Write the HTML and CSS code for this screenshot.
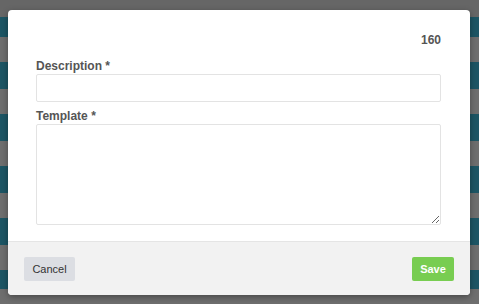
FILE: index.html
```html
<!DOCTYPE html>
<html>
<head>
<meta charset="utf-8">
<link rel="stylesheet" href="styles.css">
</head>
<body>
<div class="modal">
  <div class="modal-body">
    <div class="counter">160</div>
    <label class="label">Description *</label>
    <input class="input" type="text">
    <label class="label label-template">Template *</label>
    <textarea class="textarea"></textarea>
  </div>
  <div class="modal-footer">
    <button class="btn btn-cancel">Cancel</button>
    <button class="btn btn-save">Save</button>
  </div>
</div>
</body>
</html>
```
FILE: styles.css
```css
html, body {
  margin: 0;
  height: 100%;
}
body {
  font-family: "Liberation Sans", Arial, sans-serif;
  font-size: 12px;
  color: #555;
  background-color: #6e6e6e;
  background-image:
    linear-gradient(to bottom, #666 0px, #666 17px, transparent 17px),
    repeating-linear-gradient(to bottom, #6e6e6e 0px, #6e6e6e 25px, #1d5564 25px, #1d5564 52px);
  background-repeat: no-repeat, repeat;
  background-position: 0 0, 0 -15px;
  padding: 10px 9px 9px 8px;
  box-sizing: border-box;
}
.modal {
  width: 462px;
  height: 285px;
  background: #fff;
  border-radius: 4px;
  box-shadow: 0 2px 6px rgba(0,0,0,0.35);
  display: flex;
  flex-direction: column;
  overflow: hidden;
}
.modal-body {
  padding: 22px 29px 16px 28px;
  display: flex;
  flex-direction: column;
  flex: 1;
}
.counter {
  text-align: right;
  font-weight: bold;
  line-height: 16px;
  margin-bottom: 10px;
}
.label {
  font-weight: bold;
  line-height: 16px;
  display: block;
}
.label-template {
  margin-top: 6px;
}
.input {
  margin: 0;
  height: 28px;
  box-sizing: border-box;
  border: 1px solid #e3e3e3;
  border-radius: 2px;
  padding: 4px 8px;
  font: inherit;
}
.textarea {
  margin: 0;
  height: 101px;
  box-sizing: border-box;
  border: 1px solid #e3e3e3;
  border-radius: 2px;
  padding: 4px 8px;
  font: inherit;
  resize: vertical;
}
.modal-footer {
  background: #f2f2f2;
  border-top: 1px solid #e5e5e5;
  padding: 15px 16px 14px;
  display: flex;
  justify-content: space-between;
  align-items: center;
  flex: none;
}
.btn {
  height: 24px;
  border: none;
  border-radius: 2px;
  font-family: "Liberation Sans", Arial, sans-serif;
  font-size: 11px;
  padding: 0 8px;
  cursor: pointer;
}
.btn-cancel {
  background: #dcdee3;
  color: #333;
  width: 51px;
}
.btn-save {
  background: #78cd51;
  color: #fff;
  font-weight: bold;
  width: 42px;
}
```
